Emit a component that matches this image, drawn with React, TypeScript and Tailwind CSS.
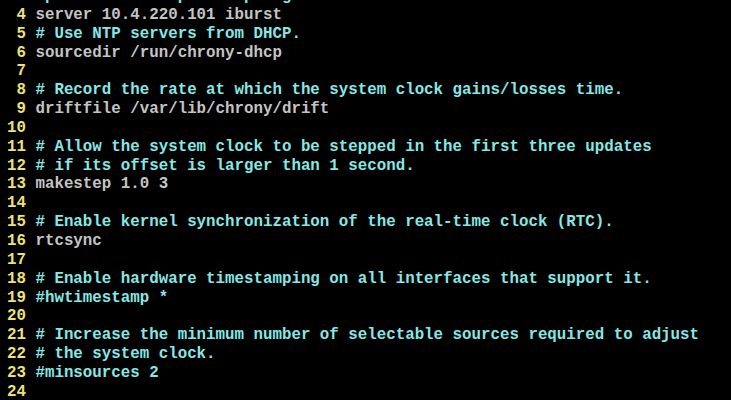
import React from "react";

type Seg = { t: string; c: "g" | "c" };
const lines: { n: number; segs: Seg[] }[] = [
  { n: 3, segs: [{ t: "#pool 2.debian.pool.ntp.org", c: "c" }, { t: " iburst", c: "g" }] },
  { n: 4, segs: [{ t: "server 10.4.220.101 iburst", c: "g" }] },
  { n: 5, segs: [{ t: "# Use NTP servers from DHCP.", c: "c" }] },
  { n: 6, segs: [{ t: "sourcedir /run/chrony-dhcp", c: "g" }] },
  { n: 7, segs: [] },
  { n: 8, segs: [{ t: "# Record the rate at which the system clock gains/losses time.", c: "c" }] },
  { n: 9, segs: [{ t: "driftfile /var/lib/chrony/drift", c: "g" }] },
  { n: 10, segs: [] },
  { n: 11, segs: [{ t: "# Allow the system clock to be stepped in the first three updates", c: "c" }] },
  { n: 12, segs: [{ t: "# if its offset is larger than 1 second.", c: "c" }] },
  { n: 13, segs: [{ t: "makestep 1.0 3", c: "g" }] },
  { n: 14, segs: [] },
  { n: 15, segs: [{ t: "# Enable kernel synchronization of the real-time clock (RTC).", c: "c" }] },
  { n: 16, segs: [{ t: "rtcsync", c: "g" }] },
  { n: 17, segs: [] },
  { n: 18, segs: [{ t: "# Enable hardware timestamping on all interfaces that support it.", c: "c" }] },
  { n: 19, segs: [{ t: "#hwtimestamp *", c: "c" }] },
  { n: 20, segs: [] },
  { n: 21, segs: [{ t: "# Increase the minimum number of selectable sources required to adjust", c: "c" }] },
  { n: 22, segs: [{ t: "# the system clock.", c: "c" }] },
  { n: 23, segs: [{ t: "#minsources 2", c: "c" }] },
  { n: 24, segs: [] },
];

export default function App() {
  return (
    <div className="w-[731px] h-[400px] overflow-hidden bg-black">
      <div
        className="flex flex-col -mt-[13px] pl-[7px] font-bold text-[15.8px] leading-[18.85px] whitespace-pre"
        style={{ fontFamily: '"Liberation Mono", "DejaVu Sans Mono", monospace' }}
      >
        {lines.map((l) => (
          <div key={l.n} className="h-[18.85px]">
            <span className="text-[#ece27a]">{String(l.n).padStart(2, " ")} </span>
            {l.segs.map((s, i) => (
              <span key={i} className={s.c === "c" ? "text-[#86e8e6]" : "text-[#c4c4c4]"}>
                {s.t}
              </span>
            ))}
          </div>
        ))}
      </div>
    </div>
  );
}
